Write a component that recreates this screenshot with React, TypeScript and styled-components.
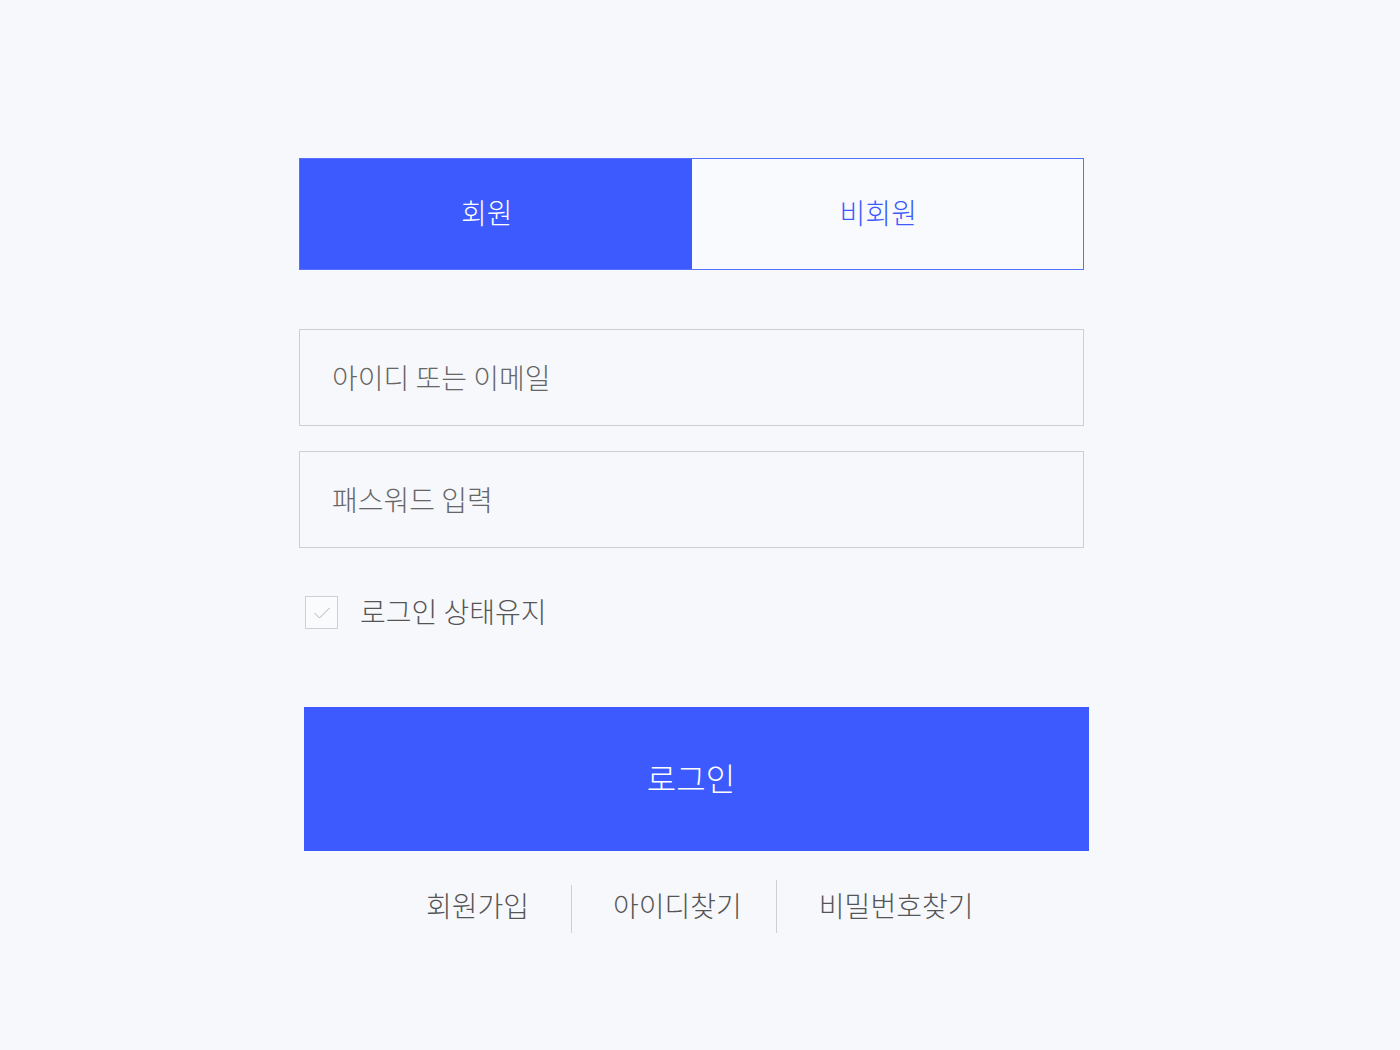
import React from "react";
import styled, { createGlobalStyle } from "styled-components";

const Global = createGlobalStyle`
  html, body { margin: 0; padding: 0; background: #f7f8fc; }
  body { font-family: "Noto Sans CJK KR", "Noto Sans", sans-serif; }
  * { box-sizing: border-box; }
`;

const BLUE = "#3d5afe";

const Page = styled.div`
  width: 1400px;
  min-height: 1050px;
  padding: 158px 0 0 299px;
`;

const Form = styled.div`
  width: 785px;
  display: flex;
  flex-direction: column;
`;

const Tabs = styled.div`
  display: flex;
  height: 112px;
  border: 1px solid #5670ff;
`;

const Tab = styled.button<{ $active?: boolean }>`
  flex: 1;
  border: none;
  margin: 0;
  padding: 0 18px 4px 0;
  background: ${(p) => (p.$active ? BLUE : "#f9fafd")};
  color: ${(p) => (p.$active ? "#ffffff" : BLUE)};
  font-family: "Noto Sans CJK KR", sans-serif;
  font-weight: 300;
  font-size: 28px;
  cursor: pointer;
`;

const Input = styled.input<{ $top: number }>`
  height: 97px;
  margin-top: ${(p) => p.$top}px;
  border: 1px solid #cfcfd3;
  background: #f7f8fc;
  padding: 0 0 2px 32px;
  font-family: "Noto Sans CJK KR", sans-serif;
  font-weight: 300;
  font-size: 28px;
  color: #333;
  outline: none;
  &::placeholder { color: #666666; }
`;

const KeepRow = styled.label`
  display: flex;
  align-items: center;
  gap: 22px;
  margin: 48px 0 0 6px;
  height: 33px;
  cursor: pointer;
`;

const CheckBox = styled.span`
  width: 33px;
  height: 33px;
  border: 1px solid #cfcfd3;
  background: #fafbfd;
  display: flex;
  align-items: center;
  justify-content: center;
`;

const Label = styled.span`
  font-family: "Noto Sans CJK KR", sans-serif;
  font-weight: 300;
  font-size: 28px;
  color: #555555;
  padding-bottom: 3px;
`;

const LoginButton = styled.button`
  margin: 78px 0 0 5px;
  width: 785px;
  height: 144px;
  border: none;
  background: ${BLUE};
  color: #ffffff;
  font-family: "Noto Sans CJK KR", sans-serif;
  font-weight: 300;
  font-size: 32px;
  padding: 0 11px 4px 0;
  cursor: pointer;
`;

const Links = styled.div`
  display: flex;
  align-items: center;
  height: 53px;
  margin: 29px 0 0 127px;
`;

const LinkText = styled.a`
  font-family: "Noto Sans CJK KR", sans-serif;
  font-weight: 300;
  font-size: 28px;
  color: #555555;
  text-decoration: none;
  padding-bottom: 4px;
  cursor: pointer;
`;

const Divider = styled.span<{ $h: number; $l: number; $r: number }>`
  align-self: flex-end;
  width: 1px;
  height: ${(p) => p.$h}px;
  background: #cfcfd3;
  margin: 0 ${(p) => p.$r}px 0 ${(p) => p.$l}px;
`;

export default function App() {
  return (
    <>
      <Global />
      <Page>
        <Form>
          <Tabs>
            <Tab $active>회원</Tab>
            <Tab>비회원</Tab>
          </Tabs>
          <Input $top={59} placeholder="아이디 또는 이메일" />
          <Input $top={25} type="password" placeholder="패스워드 입력" />
          <KeepRow>
            <CheckBox>
              <svg width="18" height="14" viewBox="0 0 18 14">
                <path d="M1.5 7 L6.5 12 L16.5 2" fill="none" stroke="#b4b4ba" strokeWidth="1" />
              </svg>
            </CheckBox>
            <Label>로그인 상태유지</Label>
          </KeepRow>
          <LoginButton>로그인</LoginButton>
          <Links>
            <LinkText>회원가입</LinkText>
            <Divider $h={48} $l={42} $r={41} />
            <LinkText>아이디찾기</LinkText>
            <Divider $h={53} $l={34} $r={42} />
            <LinkText>비밀번호찾기</LinkText>
          </Links>
        </Form>
      </Page>
    </>
  );
}
